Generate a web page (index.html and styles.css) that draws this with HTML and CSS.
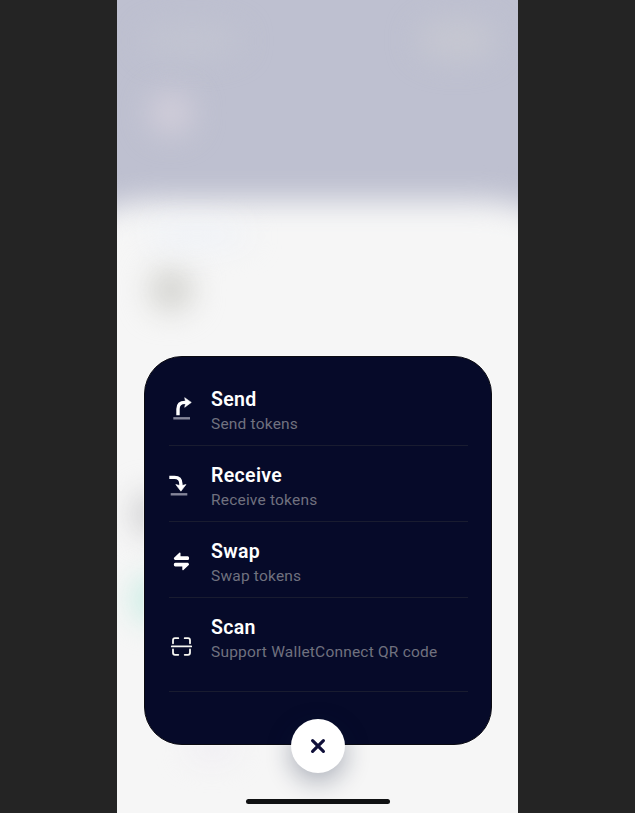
FILE: index.html
```html
<!DOCTYPE html>
<html lang="en">
<head>
<meta charset="utf-8">
<title>Wallet actions</title>
<link rel="stylesheet" href="styles.css">
</head>
<body>
<main class="phone">
  <div class="backdrop">
    <div class="surface"></div>
    <i class="blob profile"></i>
    <i class="blob controls"></i>
    <i class="blob heading"></i>
    <i class="blob token"></i>
    <i class="blob tint"></i>
    <i class="blob gray"></i>
    <i class="blob mint"></i>
    <i class="blob lilac"></i>
  </div>
  <section class="sheet">
    <div class="row">
      <svg class="icon" viewBox="0 0 32 40"><path d="M13 23.3V17Q13 10.4 20 10.4H22" fill="none" stroke="#fff" stroke-width="3.4"/><path d="M19.7 5.7L26.3 10.4L19.7 15.3L20.8 10.4Z" fill="#fff" stroke="#fff" stroke-width=".6" stroke-linejoin="round"/><path d="M8.3 26.3H25" stroke="#85869a" stroke-width="2.4"/></svg>
      <div class="text"><h2 class="title">Send</h2><p class="desc">Send tokens</p></div>
    </div>
    <div class="row">
      <svg class="icon" viewBox="0 0 32 40"><path d="M4.3 9.4H9.5Q15.9 9.4 15.9 16V18" fill="none" stroke="#fff" stroke-width="3.4"/><path d="M10.8 16.5L15.9 23.2L21 16.5L15.9 17.8Z" fill="#fff" stroke="#fff" stroke-width=".6" stroke-linejoin="round"/><path d="M5.7 26.3H22.3" stroke="#85869a" stroke-width="2.4"/></svg>
      <div class="text"><h2 class="title">Receive</h2><p class="desc">Receive tokens</p></div>
    </div>
    <div class="row">
      <svg class="icon" viewBox="0 0 32 40"><g fill="#fff" stroke="#fff" stroke-width="1.4" stroke-linejoin="round"><path d="M9.5 14.3L14.8 9.3V12.9H22.6Q23.4 12.9 23.4 14.1T22.6 15.3H10Z"/><path d="M23.3 20.5L18 25.5V21.8H10.3Q9.5 21.8 9.5 20.6T10.3 19.4H22.8Z"/></g></svg>
      <div class="text"><h2 class="title">Swap</h2><p class="desc">Swap tokens</p></div>
    </div>
    <div class="row last">
      <svg class="icon" viewBox="0 0 32 40"><path d="M8 23.3V20.2Q8 18.2 10 18.2H13.3M19.7 18.2H23Q25 18.2 25 20.2V23.3M8 29.5V32.8Q8 34.8 10 34.8H13.3M19.7 34.8H23Q25 34.8 25 32.8V29.5M6.8 26.4H26.2" fill="none" stroke="#f7f7f2" stroke-width="1.8" stroke-linecap="round"/></svg>
      <div class="text"><h2 class="title">Scan</h2><p class="desc">Support WalletConnect QR code</p></div>
    </div>
    <button class="close" aria-label="Close"><svg viewBox="0 0 16 16"><path d="M2.6 2.7L13.4 13.3M13.4 2.7L2.6 13.3" stroke="#10103a" stroke-width="3.2" stroke-linecap="round"/></svg></button>
  </section>
  <div class="home"></div>
</main>
</body>
</html>
```
FILE: styles.css
```css
* { box-sizing: border-box; }
body { margin: 0; height: 813px; overflow: hidden; background: #242424; display: flex; justify-content: center; font-family: Roboto, "Liberation Sans", sans-serif; }
.phone { position: relative; width: 401px; height: 813px; padding: 356px 26.5px 0 27px; overflow: hidden; }

/* Blurred wallet screen behind the menu */
.backdrop { position: absolute; inset: 0; overflow: hidden; background: #bec0d0; }
.surface { position: absolute; inset: 201px -30px -60px; border-radius: 70px 70px 0 0 / 28px 28px 0 0; background: #f6f6f6; filter: blur(15px); }
.blob { position: absolute; border-radius: 50%; filter: blur(15px); }
.profile { left: 32px; top: 91px; width: 44px; height: 44px; background: #d2ceda; }
.controls { left: 300px; top: 20px; width: 80px; height: 40px; background: #c6c7d1; }
.heading { left: 25px; top: 25px; width: 100px; height: 32px; background: #c2c4d1; }
.token { left: 32px; top: 268px; width: 44px; height: 44px; background: #d2d2ce; }
.tint { left: 25px; top: 226px; width: 110px; height: 20px; background: #edf1f8; }
.gray { left: 14px; top: 492px; width: 44px; height: 44px; background: #d0d0d2; }
.mint { left: 14px; top: 575px; width: 44px; height: 48px; background: #caede4; }
.lilac { left: 70px; top: 738px; width: 50px; height: 20px; background: #eeeaf2; }

.sheet { position: relative; width: 347.5px; height: 389px; padding: 13px 23px 0 23.5px; border: 1px solid #0b0b12; border-radius: 38px; background: #060a29; box-shadow: 0 0 0 1px #ffffff66; }
.row { height: 76px; display: flex; align-items: flex-start; border-bottom: 1px solid #191c30; }
.row.last { height: 94px; }
.icon { width: 32px; height: 40px; margin: 22px 0 0 -3.5px; flex: none; }
.text { padding: 18px 0 0 14px; }
.title, .desc { margin: 0; white-space: nowrap; }
.title { font-size: 19.5px; line-height: 24px; font-weight: 600; letter-spacing: .35px; color: #fff; }
.desc { font-size: 15.5px; line-height: 20px; margin-top: 2px; color: #70717f; letter-spacing: .2px; }
.close { position: absolute; left: 146px; bottom: -29px; width: 54px; height: 54px; padding: 0; border: 0; border-radius: 50%; background: #fff; display: grid; place-items: center; box-shadow: 0 8px 26px #101b3855; }
.close svg { width: 16px; height: 16px; }
.home { position: absolute; left: 129px; bottom: 9px; width: 144px; height: 5px; border-radius: 3px; background: #101112; }
```
